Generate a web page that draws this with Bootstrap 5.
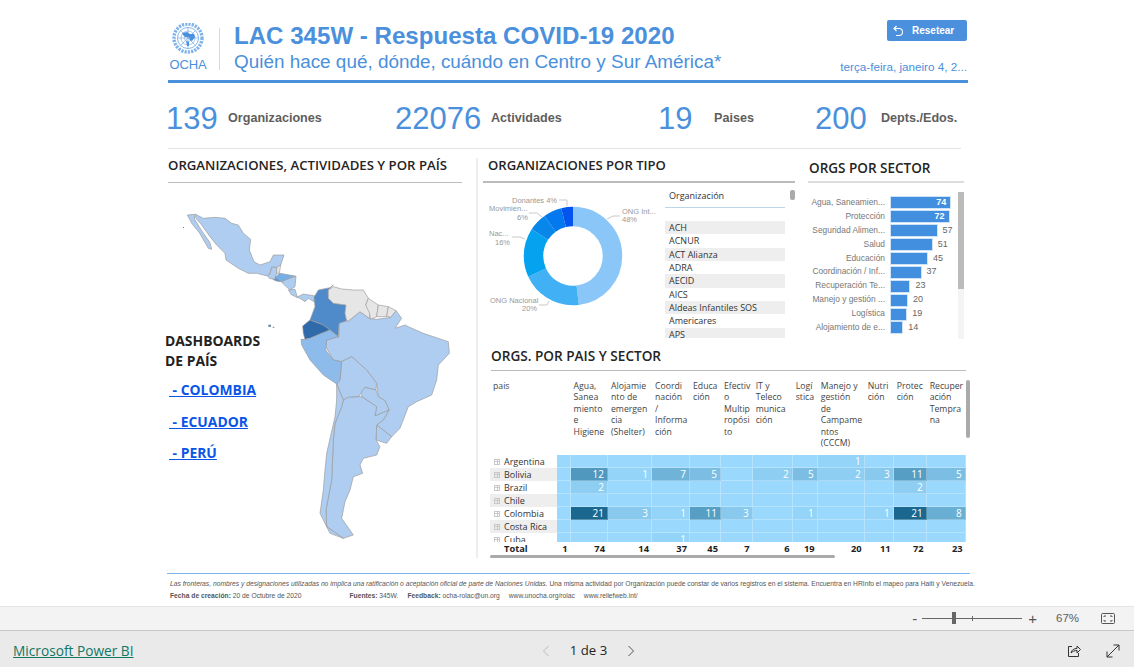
<!DOCTYPE html>
<html lang="es">
<head>
    <meta charset="UTF-8" />
    <meta name="viewport" content="width=device-width, initial-scale=1" />
    <title>LAC 345W - Respuesta COVID-19 2020</title>
    <link href="https://cdn.jsdelivr.net/npm/bootstrap@5.3.2/dist/css/bootstrap.min.css" rel="stylesheet" />
    <style>
        html, body { height: 667px; overflow: hidden; background: #fff; }
        body { font-family: "Liberation Sans", Arial, sans-serif; }
        .report { height: 606px; padding: 15px 0 0 167px; overflow: hidden; }
        .report-inner { width: 806px; }
        .report-head { height: 65px; width: 800px; }
        .un-logo { width: 40px; margin-left: 1px; }
        .un-logo span { display: block; font-size: 13px; line-height: 13px; color: #4a90dc; margin-top: 2px; letter-spacing: -.1px; }
        .head-sep { width: 1px; height: 42px; background: #c5ddf5; margin: 13px 14px 0 11px; }
        .head-title { font-size: 24.1px; font-weight: 700; color: #4a90dc; line-height: 28px; margin-top: 7px; white-space: nowrap; }
        .head-sub { font-size: 18.9px; color: #4a90dc; line-height: 24px; margin-top: 0; white-space: nowrap; }
        .head-right { width: 130px; margin-left: auto; }
        .reset-btn { width: 80px; height: 21px; padding: 0 0 0 5px; margin: 5px 0 0 50px; border: 0; border-radius: 2px; background: #4a90dc; color: #fff; font-size: 10px; font-weight: 700; }
        .date-txt { font-size: 11.7px; color: #4a90dc; text-align: right; margin-top: 17px; white-space: nowrap; }
        .blue-rule { height: 3px; width: 800px; margin-left: 1px; background: #4a90dc; }
        .kpis { display: grid; grid-template-columns: 229px 263px 157px 1fr; width: 801px; height: 65px; padding-top: 17px; margin-left: -1px; }
        .kpi-num { font-size: 31px; line-height: 36px; color: #4a90dc; margin-top: 1px; }
        .kpi-lab { font-size: 12.6px; font-weight: 700; color: #605e5c; line-height: 36px; white-space: nowrap; }
        .grey-rule { height: 1px; width: 793px; margin-left: 1px; background: #e3e3e3; }
        .panels { height: 410px; }
        .left-panel { width: 309px; height: 410px; position: relative; }
        .panel-title { font-family: "Open Sans", sans-serif; font-size: 13.2px; font-weight: 600; color: #252423; white-space: nowrap; line-height: 18px; }
        .title-left { margin-left: 1px; width: 294px; height: 34px; padding-top: 7px; border-bottom: 1px solid #bbb; }
        .v-sep { width: 2px; height: 400px; margin-top: 9px; background: #eee; }
        .right-col { margin-left: 1px; width: 492px; }
        .top-row { height: 196px; }
        .mid-panel { width: 316px; }
        .title-mid { margin-left: 4px; padding: 7px 0 0 5px; height: 34px; border-bottom: 2px solid #bbb; font-size: 13.1px; }
        .donut-box { width: 186px; margin-top: 2px; }
        .slicer { width: 122px; height: 155px; overflow: hidden; }
        .slicer-head { font-family: "Open Sans", sans-serif; font-size: 9px; color: #333; height: 25px; padding: 6px 0 0 4px; border-bottom: 1px solid #bcd4ec; margin-bottom: 13px; }
        .slicer-row { font-family: "Open Sans", sans-serif; font-size: 9px; color: #333; height: 13.35px; line-height: 13.4px; padding-left: 4px; white-space: nowrap; }
        .slicer-row:nth-child(even) { background: #eee; }
        .thumb-sm { width: 5px; height: 10px; margin: 7px 0 0 5px; background: #aaa; border-radius: 2px; }
        .sector-panel { margin-left: 12px; width: 157px; padding-left: 1px; }
        .title-sector { height: 34px; padding-top: 10px; padding-left: 1px; border-bottom: 2px solid #ddd; font-size: 13.5px; }
        .bars-wrap { height: 156px; }
        .bars { width: 150px; padding-top: 13px; }
        .bar-row { height: 13.9px; }
        .bar-lab { width: 77px; text-align: right; font-size: 8.4px; color: #777; white-space: nowrap; line-height: 13.9px; overflow: hidden; }
        .bar-fill { height: 11px; margin-left: 6px; background: #418fde; box-shadow: 0 0 0 1px #cfe3f7; color: #fff; font-size: 9px; font-weight: 700; text-align: right; padding-right: 4px; line-height: 11px; }
        .bar-val { font-size: 9px; color: #666; margin-left: 6px; line-height: 13.9px; }
        .track { width: 6px; height: 147px; margin-top: 9px; background: #f4f4f4; }
        .track div { height: 97px; background: #bbb; }
        .matrix-panel { width: 482px; margin-left: 11px; position: relative; }
        .title-matrix { height: 26px; padding-top: 2px; border-bottom: 1px solid #bbb; font-size: 13.6px; margin-left: 1px; width: 475px; }
        .mx { font-family: "Open Sans", sans-serif; font-size: 8.7px; color: #444; }
        .mx-grid { display: grid; grid-template-columns: 67px 13.6px 37.4px 44px 38px 31px 31.7px 40px 25px 47px 29px 33px 39px; }
        .mx-head { height: 84px; padding-top: 10px; line-height: 11.4px; }
        .mx-head div { padding-left: 3px; white-space: nowrap; }
        .mx-row { overflow: hidden; }
        .mx-cell { border: 1px solid rgba(255, 255, 255, .28); border-width: 0 1px 1px 0; color: #fff; text-align: right; padding-right: 3px; font-size: 10px; font-weight: 500; line-height: 12px; }
        .mx-name { padding-left: 14px; position: relative; font-size: 9px; line-height: 13px; color: #333; white-space: nowrap; }
        .mx-name::before { content: ""; position: absolute; left: 4px; top: 3.5px; width: 6px; height: 6px; border: 1px solid #c8c8c8; background: linear-gradient(#c8c8c8, #c8c8c8) center/4px 1px no-repeat, linear-gradient(#c8c8c8, #c8c8c8) center/1px 4px no-repeat; }
        .mx-alt { background: #eee; }
        .mx-total { height: 13px; font-weight: 700; color: #222; font-size: 9.3px; line-height: 13px; }
        .mx-total div { text-align: right; padding-right: 3px; }
        .mx-total div:first-child { text-align: left; padding-left: 14px; }
        .mx-hbar { width: 345px; height: 3px; background: #aaa; border-radius: 2px; }
        .mx-vbar { position: absolute; top: 35px; left: 476px; width: 4px; height: 58px; background: #aaa; border-radius: 2px; }
        .links-box { position: absolute; left: -2px; top: 182px; font-family: "Open Sans", sans-serif; font-weight: 700; font-size: 13.9px; color: #222; line-height: 20px; }
        .links-box a { display: block; margin-left: 4px; color: #0a55e8; white-space: pre; }
        .link-first { margin-top: 9px; }
        .link-next { margin-top: 12px; }
        .link-last { margin-top: 11px; }
        .foot-notes { width: 803px; margin-top: 14px; border-top: 1px solid #7ab5ee; padding: 4px 0 0 3px; font-size: 6.72px; color: #555; line-height: 12px; white-space: nowrap; }
        .foot-gap { margin-left: 48px; }
        .foot-gap2 { margin-left: 9px; }
        .zoom-bar { height: 25px; background: #f3f3f3; border-top: 1px solid #e4e4e4; border-bottom: 1px solid #c8c8c8; color: #605e5c; }
        .slider-line { width: 100px; height: 1px; background: #666; position: relative; margin: 0 6px 0 5px; }
        .slider-line i { position: absolute; left: 30px; top: -6px; width: 4px; height: 12px; background: #666; }
        .slider-line b { position: absolute; left: 50px; top: -2px; width: 1px; height: 5px; background: #666; }
        .zoom-sign { font-size: 15px; line-height: 15px; color: #555; }
        .zoom-pct { font-size: 11.5px; margin-left: 19px; width: 45px; }
        .fit-ico { margin-right: 19px; }
        .page-bar { height: 36px; padding-top: 4px; background: #eaeaea; }
        .pbi-link { margin-left: 13px; font-family: "Open Sans", sans-serif; font-size: 13.7px; color: #117865; white-space: nowrap; width: 529px; }
        .pager { font-family: "Open Sans", sans-serif; font-size: 13.2px; color: #252423; width: 77px; }
        .expand-ico { margin: 0 14px 0 25px; }
    </style>
</head>
<body class="m-0">
<div class="report">
    <div class="report-inner">
        <div class="report-head d-flex">
            <div class="un-logo text-center">
                <svg width="40" height="33" viewBox="0 0 40 33" fill="none" stroke="#6aa5e4" class="d-block mt-2">
                    <circle cx="20" cy="15" r="14" stroke-width="3.4" stroke-dasharray="2.2 1.1" stroke="#7fb2ea"/>
                    <circle cx="20" cy="15" r="10.5" stroke-width=".8"/>
                    <circle cx="20" cy="15" r="7" stroke-width=".6"/>
                    <circle cx="20" cy="15" r="3.5" stroke-width=".6"/>
                    <path d="M9.5 15h21M20 4.500v21M12.500 7.500l15 15M27.500 7.500l-15 15" stroke-width=".6"/>
                    <path d="M14 10l5-1 3 2 4 0 1 3-3 4-2-1-1-3-4 0-2-2zM18 18l3 1 0 4-2 0z" fill="#4a90dc" stroke="none"/>
                </svg>
                <span>OCHA</span>
            </div>
            <div class="head-sep"></div>
            <div>
                <div class="head-title">LAC 345W - Respuesta COVID-19 2020</div>
                <div class="head-sub">Quién hace qué, dónde, cuándo en Centro y Sur América*</div>
            </div>
            <div class="head-right">
                <button class="btn reset-btn d-flex align-items-center gap-2">
                    <svg width="12" height="12" viewBox="0 0 12 12" fill="none" stroke="#fff" stroke-width="1.1"><path d="M4.500 1 2 3.500 4.500 6M2 3.500h5a3.500 3.500 0 0 1 0 7H4"/></svg>
                    Resetear
                </button>
                <div class="date-txt">terça-feira, janeiro 4, 2...</div>
            </div>
        </div>
        <div class="blue-rule"></div>
        <div class="kpis">
            <div class="d-flex"><div class="kpi-num" style="width:62px">139</div><div class="kpi-lab">Organizaciones</div></div>
            <div class="d-flex"><div class="kpi-num" style="width:96px">22076</div><div class="kpi-lab">Actividades</div></div>
            <div class="d-flex"><div class="kpi-num" style="width:56px">19</div><div class="kpi-lab">Paises</div></div>
            <div class="d-flex"><div class="kpi-num" style="width:66px">200</div><div class="kpi-lab">Depts./Edos.</div></div>
        </div>
        <div class="grey-rule"></div>

        <div class="panels d-flex">
            <div class="left-panel">
                <div class="panel-title title-left">ORGANIZACIONES, ACTIVIDADES Y POR PAÍS</div>
                <!-- map is traced in 3x coords from the crop -->
                <svg width="307" height="360" viewBox="21 -21 921 1080" class="d-block" stroke="#9a9a9a" stroke-width="2" stroke-linejoin="round">
                    <g fill="#aecdf0">
                        <path d="M105 72 130 85 165 82 195 85 215 100 235 105 250 130 272 148 268 180 282 215 300 225 330 215 340 195 372 195 362 225 352 232 335 232 330 252 322 258 290 250 265 250 235 235 198 210 195 190 170 165 150 140 125 105 108 85Z"/>
                        <path d="M82 75 103 73 104 88 125 122 150 158 155 178 145 175 118 128 95 100Z"/>
                        <path d="M322 256 330 252 335 232 350 232 350 252 345 262 340 268 328 265Z"/>
                        <path d="M365 275 380 268 408 258 405 290 390 300 370 282Z"/>
                        <path d="M385 300 405 298 412 322 395 315Z"/>
                        <path d="M410 322 430 312 465 318 462 335 445 325 435 335 420 325Z"/>
                        <path d="M497 470 500 450 537 440 537 400 560 392 565 393 600 365 628 385 650 388 692 382 708 362 725 385 705 415 735 405 745 410 790 430 865 455 868 490 835 525 830 570 815 615 770 635 745 650 720 715 695 740 650 705 670 690 687 660 675 632 655 620 650 580 620 540 575 500 545 515 520 510Z"/>
                        <path d="M545 515 575 500 620 540 650 580 648 600 615 592 605 605 597 620 565 622 550 630 530 582 540 570Z"/>
                        <path d="M605 605 615 592 648 600 655 620 675 632 687 660 645 678 650 650 605 620Z"/>
                        <path d="M650 705 695 740 680 760 648 750Z"/>
                        <path d="M550 630 565 622 597 620 605 620 650 650 645 678 687 660 670 690 650 705 648 750 660 770 650 795 610 805 600 825 608 850 580 860 570 900 555 935 545 985 580 1035 550 1045 500 1010 498 960 515 870 520 750 525 700 545 650Z"/>
                        <path d="M530 582 550 630 545 650 525 700 520 750 515 870 498 960 500 1010 550 1045 510 1030 480 970 490 900 495 840 500 790 525 680 530 630Z"/>
                    </g>
                    <path fill="#e6e6e6" d="M350 232 362 225 358 250 350 250Z"/>
                    <path fill="#76aeea" d="M345 262 360 250 405 258 380 268 365 275 345 268Z"/>
                    <path fill="#5f94d0" d="M340 268 350 265 362 275 345 272Z"/>
                    <path fill="#4f8bca" d="M520 285 505 300 505 325 520 340 558 345 555 370 560 392 537 400 535 440 510 420 490 405 465 395 450 390 465 350 462 322 475 300 510 293Z"/>
                    <path fill="#2f6bab" d="M450 390 490 405 510 420 480 432 450 445 435 448 430 430 428 408Z"/>
                    <path fill="#8dbbec" d="M423 448 435 448 450 445 480 432 510 420 535 440 500 450 497 480 520 510 545 515 540 570 530 582 490 555 450 510 425 465Z"/>
                    <g fill="#e6e6e6">
                        <path d="M505 300 520 290 545 297 580 300 610 300 625 325 617 345 632 360 628 385 600 365 565 393 560 392 555 370 558 345 520 340 505 325Z"/>
                        <path d="M625 325 655 345 650 380 632 388 628 368 617 345Z"/>
                        <path d="M655 345 685 350 680 380 650 380Z"/>
                        <path d="M685 350 708 362 692 382 680 378Z"/>
                    </g>
                    <path fill="#5f7fa5" stroke="none" d="M325 404h8v6h-8zM338 410h5v3h-5zM69 111h3v3h-3z"/>
                </svg>
                <div class="links-box">
                    <div>DASHBOARDS<br>DE PAÍS</div>
                    <a href="#" class="link-first"> - COLOMBIA</a>
                    <a href="#" class="link-next"> - ECUADOR</a>
                    <a href="#" class="link-last"> - PERÚ</a>
                </div>
            </div>
            <div class="v-sep"></div>
            <div class="right-col">
                <div class="top-row d-flex">
                    <div class="mid-panel">
                        <div class="panel-title title-mid">ORGANIZACIONES POR TIPO</div>
                        <div class="d-flex">
                            <div class="donut-box">
                                <svg width="186" height="156" viewBox="0 0 186 156" class="d-block" fill="none">
                                    <g id="donut" stroke-width="19.5" transform="rotate(-90 94 71)"></g>
                                    <g stroke="#bbb" stroke-width=".8">
                                        <path d="M128 34l6-3h7M80 15h8v6M50 28h8l5 4M33 52h8l5 2M60 120h8l2-4"/>
                                    </g>
                                    <g font-size="7.5" fill="#999" font-family="Liberation Sans, sans-serif">
                                        <text x="143" y="29">ONG Int...</text>
                                        <text x="143" y="37">48%</text>
                                        <text x="33" y="18">Donantes 4%</text>
                                        <text x="10" y="26">Movimien...</text>
                                        <text x="38" y="35">6%</text>
                                        <text x="10" y="51">Nac...</text>
                                        <text x="16" y="60">16%</text>
                                        <text x="11" y="118">ONG Nacional</text>
                                        <text x="43" y="126">20%</text>
                                    </g>
                                </svg>
                            </div>
                            <div class="slicer">
                                <div class="slicer-head">Organización</div>
                                <div id="slicer-rows"></div>
                            </div>
                            <div class="thumb-sm"></div>
                        </div>
                    </div>
                    <div class="sector-panel">
                        <div class="panel-title title-sector">ORGS POR SECTOR</div>
                        <div class="bars-wrap d-flex">
                            <div class="bars" id="bars"></div>
                            <div class="track"><div></div></div>
                        </div>
                    </div>
                </div>
                <div class="matrix-panel">
                    <div class="panel-title title-matrix">ORGS. POR PAIS Y SECTOR</div>
                    <div class="mx" id="matrix"></div>
                    <div class="mx-vbar"></div>
                </div>
            </div>
        </div>

        <div class="foot-notes">
            <div><em>Las fronteras, nombres y designaciones utilizadas no implica una ratificación o aceptación oficial de parte de Naciones Unidas.</em> Una misma actividad por Organización puede constar de varios registros en el sistema. Encuentra en HRInfo el mapeo para Haití y Venezuela.</div>
            <div><b>Fecha de creación:</b> 20 de Octubre de 2020<span class="foot-gap"><b>Fuentes:</b> 345W.</span><span class="foot-gap2"><b>Feedback:</b> ocha-rolac@un.org</span><span class="foot-gap2">www.unocha.org/rolac</span><span class="foot-gap2">www.reliefweb.int/</span></div>
        </div>
    </div>
</div>

<div class="zoom-bar d-flex align-items-center justify-content-end">
    <span class="zoom-sign">-</span>
    <div class="slider-line"><i></i><b></b></div>
    <span class="zoom-sign">+</span>
    <span class="zoom-pct">67%</span>
    <svg width="14" height="11" viewBox="0 0 14 11" fill="none" stroke="#555" class="fit-ico"><rect x=".5" y=".5" width="13" height="10" rx="1"/><path d="M3 4V3h2M9 3h2v1M11 7v1H9M5 8H3V7"/></svg>
</div>
<div class="page-bar d-flex align-items-center">
    <a href="#" class="pbi-link">Microsoft Power BI</a>
    <div class="d-flex align-items-center">
        <svg width="8" height="12" viewBox="0 0 8 12" fill="none" stroke="#bbb"><path d="M6.500 1 1.500 6l5 5"/></svg>
        <div class="pager text-center">1 de 3</div>
        <svg width="8" height="12" viewBox="0 0 8 12" fill="none" stroke="#555"><path d="M1.500 1l5 5-5 5"/></svg>
    </div>
    <div class="ms-auto d-flex align-items-center">
        <svg width="14" height="14" viewBox="0 0 14 14" fill="none" stroke="#333"><path d="M5 2.500H1.500v10h10V9M4 9c.5-3 3-4.500 6-4.500V2l3.500 3.500L10 9V6.500C7.500 6.500 5.500 7.500 4 9z"/></svg>
        <svg width="14" height="14" viewBox="0 0 14 14" fill="none" stroke="#333" class="expand-ico"><path d="M1 13 13 1M7.500 1H13v5.500M1 7.500V13h5.500"/></svg>
    </div>
</div>

<script>
    // donut slices, clockwise from the top
    const slices = [[48, '#8ac6f8'], [20, '#42b0f5'], [16, '#05a2f0'], [6, '#0787ea'], [6, '#0478ee'], [4, '#0455f0']];
    const circ = 2 * Math.PI * 39.5;
    let used = 0;
    document.getElementById('donut').innerHTML = slices.map(([pct, color]) => {
        const len = circ * pct / 100;
        const out = `<circle cx="94" cy="71" r="39.5" stroke="${color}" stroke-dasharray="${len} ${circ - len}" stroke-dashoffset="${-used}"/>`;
        used += len;
        return out;
    }).join('');

    const orgs = ['ACH', 'ACNUR', 'ACT Alianza', 'ADRA', 'AECID', 'AICS', 'Aldeas Infantiles SOS', 'Americares', 'APS'];
    // first row is grey, nth-child(even) shifted with an empty leader
    document.getElementById('slicer-rows').innerHTML = '<div class="d-none"></div>' +
        orgs.map(o => `<div class="slicer-row">${o}</div>`).join('');

    const sectors = [
        ['Agua, Saneamien...', 74], ['Protección', 72], ['Seguridad Alimen...', 57], ['Salud', 51], ['Educación', 45],
        ['Coordinación / Inf...', 37], ['Recuperación Te...', 23], ['Manejo y gestión ...', 20], ['Logística', 19], ['Alojamiento de e...', 14]
    ];
    document.getElementById('bars').innerHTML = sectors.map(([name, v]) => `
        <div class="bar-row d-flex align-items-center">
            <div class="bar-lab">${name}</div>
            <div class="bar-fill" style="width:${v * 0.8}px">${v > 60 ? v : ''}</div>
            ${v > 60 ? '' : `<div class="bar-val">${v}</div>`}
        </div>`).join('');

    // matrix
    const heads = ['pais', '', 'Agua,<br>Sanea<br>miento<br>e<br>Higiene', 'Alojamie<br>nto de<br>emergen<br>cia<br>(Shelter)',
        'Coordi<br>nación<br>/<br>Informa<br>ción', 'Educa<br>ción', 'Efectiv<br>o<br>Multip<br>ropósi<br>to', 'IT y<br>Teleco<br>munica<br>ción',
        'Logí<br>stica', 'Manejo y<br>gestión<br>de<br>Campame<br>ntos<br>(CCCM)', 'Nutri<br>ción', 'Protec<br>ción', 'Recuper<br>ación<br>Tempra<br>na'];
    const rows = [
        ['Argentina', 13, [0, 0, 0, 0, 0, 0, 0, 0, 1, 0, 0, 0]],
        ['Bolivia', 13, [0, 12, 1, 7, 5, 0, 2, 5, 2, 3, 11, 5]],
        ['Brazil', 13, [0, 2, 0, 0, 0, 0, 0, 0, 0, 0, 2, 0]],
        ['Chile', 13, [0, 0, 0, 0, 0, 0, 0, 0, 0, 0, 0, 0]],
        ['Colombia', 13, [0, 21, 3, 1, 11, 3, 0, 1, 0, 1, 21, 8]],
        ['Costa Rica', 13, [0, 0, 0, 0, 0, 0, 0, 0, 0, 0, 0, 0]],
        ['Cuba', 9, [0, 0, 0, 1, 0, 0, 0, 0, 0, 0, 0, 0]]
    ];
    const totals = ['Total', 1, 74, 14, 37, 45, 7, 6, 19, 20, 11, 72, 23];

    function heat(v) {
        const t = v / 21;
        const mix = (a, b) => Math.round(a + (b - a) * t);
        return `rgb(${mix(154, 26)},${mix(217, 104)},${mix(253, 144)})`;
    }

    document.getElementById('matrix').innerHTML =
        `<div class="mx-grid mx-head">${heads.map(h => `<div>${h}</div>`).join('')}</div>` +
        rows.map(([name, h, vals], i) => `
            <div class="mx-grid mx-row" style="height:${h}px">
                <div class="mx-name ${i % 2 ? 'mx-alt' : ''}">${name}</div>
                ${vals.map(v => `<div class="mx-cell" style="background:${heat(v)}">${v || ''}</div>`).join('')}
            </div>`).join('') +
        `<div class="mx-grid mx-total">${totals.map(t => `<div>${t}</div>`).join('')}</div><div class="mx-hbar"></div>`;
</script>
<script src="https://cdn.jsdelivr.net/npm/bootstrap@5.3.2/dist/js/bootstrap.bundle.min.js"></script>
</body>
</html>
